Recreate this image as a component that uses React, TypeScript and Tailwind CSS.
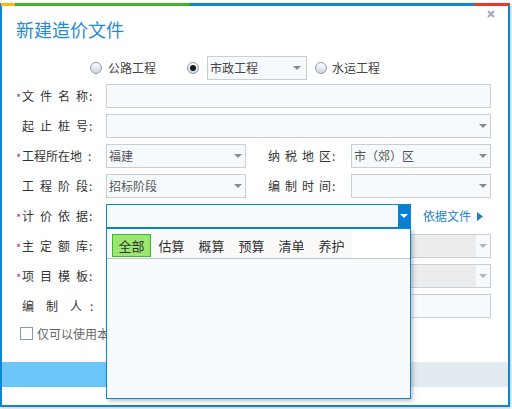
import React from 'react'

const font = "font-['Microsoft_YaHei','Noto_Sans_CJK_SC',sans-serif]"

function Arrow({ color = '#8a8a8a' }: { color?: string }) {
  return (
    <svg width="8" height="4" viewBox="0 0 8 4">
      <path d="M0 0h8L4 4z" fill={color} />
    </svg>
  )
}

function Radio({ checked = false }: { checked?: boolean }) {
  return (
    <span className="flex h-[12px] w-[12px] shrink-0 items-center justify-center rounded-full border border-[#8d9db0] bg-gradient-to-b from-white to-[#c9d5e2]">
      {checked && <span className="h-[6px] w-[6px] rounded-full bg-[#1b1b1b]" />}
    </span>
  )
}

// label column: star slot + spaced characters + colon
function Label({ text, star, gap, colonGap }: { text: string; star?: boolean; gap: string; colonGap: string }) {
  const chars = text.split('')
  return (
    <div className="flex w-[90px] shrink-0 items-center text-[12px] text-[#333]">
      <span className="w-[6px] pt-[3px] text-[11px] leading-none text-[#a3348f]">{star ? '*' : ''}</span>
      {chars.map((c, i) => (
        <span key={i} className={i < chars.length - 1 ? gap : ''}>
          {c}
        </span>
      ))}
      <span className={colonGap}>:</span>
    </div>
  )
}

function Field({ width, text, arrow, disabled }: { width: string; text?: string; arrow?: boolean; disabled?: boolean }) {
  return (
    <div
      className={`flex h-6 shrink-0 items-center border border-[#c6d0d8] text-[12px] text-[#555] ${width} ${
        disabled ? 'bg-[#ececec]' : 'bg-[#f6fafd]'
      }`}
    >
      <span className="flex-1 pl-[2px]">{text}</span>
      {arrow && (
        <span className="flex h-full w-[14px] items-center justify-center bg-[#f6fafd]">
          <Arrow color={disabled ? '#b5b5b5' : '#8a8a8a'} />
        </span>
      )}
    </div>
  )
}

const tabs = ['全部', '估算', '概算', '预算', '清单', '养护']

export default function App() {
  return (
    <div className={`h-[409px] w-[512px] overflow-hidden bg-white ${font}`}>
      <div className="relative mt-[3px] h-[404px] w-[510px] border-x-2 border-b-2 border-[#0b87d4] shadow-[1px_1px_3px_rgba(0,0,0,0.25)]">
        {/* colour strip */}
        <div className="-mx-[1px] flex h-[3px]">
          <div className="w-[14px] bg-[#f6b812]" />
          <div className="w-[175px] bg-[#3fb42a]" />
          <div className="w-[284px] bg-[#0b87d4]" />
          <div className="flex-1 bg-[#e33b2c]" />
        </div>

        <svg className="absolute right-[13px] top-[7px]" width="8" height="8" viewBox="0 0 8 8">
          <path d="M1 1l6 6M7 1L1 7" stroke="#9eaac4" strokeWidth="2" />
        </svg>

        <div className="pl-[14px] pt-[11px] text-[18px] leading-6 text-[#1f8ad6]">新建造价文件</div>

        {/* project type */}
        <div className="ml-[88px] mt-[15px] flex h-6 items-center text-[12px] text-[#444]">
          <Radio />
          <span className="ml-[6px]">公路工程</span>
          <span className="ml-[31px]"><Radio checked /></span>
          <div className="ml-[8px] flex h-6 w-[100px] items-center border border-[#c6d0d8] bg-[#f6fafd] pl-[2px]">
            <span className="flex-1">市政工程</span>
            <span className="mr-[5px]"><Arrow /></span>
          </div>
          <span className="ml-[8px]"><Radio /></span>
          <span className="ml-[5px]">水运工程</span>
        </div>

        {/* form */}
        <div className="mt-[4px] flex flex-col gap-[6px] pl-[14px]">
          <div className="flex items-center">
            <Label text="文件名称" star gap="mr-[6px]" colonGap="ml-[1px]" />
            <Field width="w-[385px]" />
          </div>
          <div className="flex items-center">
            <Label text="起止桩号" gap="mr-[6px]" colonGap="ml-[1px]" />
            <Field width="w-[385px]" arrow />
          </div>
          <div className="flex items-center">
            <Label text="工程所在地" star gap="" colonGap="ml-[6px]" />
            <Field width="w-[140px]" text="福建" arrow />
            <div className="ml-[16px]">
              <Label text="纳税地区" gap="mr-[5px]" colonGap="ml-[1px]" />
            </div>
            <div className="-ml-[1px]">
              <Field width="w-[140px]" text="市（郊）区" arrow />
            </div>
          </div>
          <div className="flex items-center">
            <Label text="工程阶段" gap="mr-[6px]" colonGap="ml-[1px]" />
            <Field width="w-[140px]" text="招标阶段" arrow />
            <div className="ml-[16px]">
              <Label text="编制时间" gap="mr-[5px]" colonGap="ml-[1px]" />
            </div>
            <div className="-ml-[1px]">
              <Field width="w-[140px]" arrow />
            </div>
          </div>

          <div className="relative z-10 flex items-center">
            <Label text="计价依据" star gap="mr-[6px]" colonGap="ml-[1px]" />
            <div className="flex h-6 w-[305px] items-stretch border border-[#0a84d6] bg-[#f6fafd]">
              <span className="flex-1" />
              <span className="flex w-[12px] items-center justify-center bg-[#0a7fd2]">
                <Arrow color="#ffffff" />
              </span>
            </div>
            <span className="ml-[12px] text-[12px] text-[#1d7fcc]">依据文件</span>
            <svg className="ml-[6px]" width="6" height="9" viewBox="0 0 6 9">
              <path d="M0 0l6 4.5L0 9z" fill="#1d7fcc" />
            </svg>

            {/* dropdown popup */}
            <div className="absolute left-[90px] top-6 flex h-[171px] w-[305px] flex-col border border-[#0a84d6] bg-[#f7fbfd] shadow-[2px_2px_4px_rgba(0,0,0,0.25)]">
              <div className="flex h-[30px] border-b border-[#c4c4c4] bg-white">
                <div className="flex h-full gap-[1px] bg-[#fafafa] pl-[5px] pr-[1px] pt-[5px]">
                  {tabs.map((t, i) => (
                    <span
                      key={t}
                      className={`flex h-[23px] w-[39px] items-center justify-center text-[13px] text-[#333] ${
                        i === 0 ? 'border border-[#3db43a] bg-[#9be66f]' : ''
                      }`}
                    >
                      {t}
                    </span>
                  ))}
                </div>
              </div>
              <div className="flex-1" />
            </div>
          </div>

          <div className="flex items-center">
            <Label text="主定额库" star gap="mr-[6px]" colonGap="ml-[1px]" />
            <Field width="w-[385px]" arrow disabled />
          </div>
          <div className="flex items-center">
            <Label text="项目模板" star gap="mr-[6px]" colonGap="ml-[1px]" />
            <Field width="w-[385px]" arrow disabled />
          </div>
          <div className="flex items-center">
            <Label text="编制人" gap="mr-[12px]" colonGap="ml-[8px]" />
            <Field width="w-[385px]" />
          </div>
        </div>

        <div className="ml-[18px] mt-[9px] flex h-[13px] items-center text-[12px] text-[#666]">
          <span className="h-[13px] w-[13px] border border-[#7f98b4] bg-white" />
          <span className="ml-[4px]">仅可以使用本地区定额</span>
        </div>

        <div className="mt-[22px] flex h-[25px]">
          <div className="w-[300px] bg-[#6cc6fa]" />
          <div className="flex-1 bg-[#e1ebf0]" />
        </div>
      </div>
    </div>
  )
}
